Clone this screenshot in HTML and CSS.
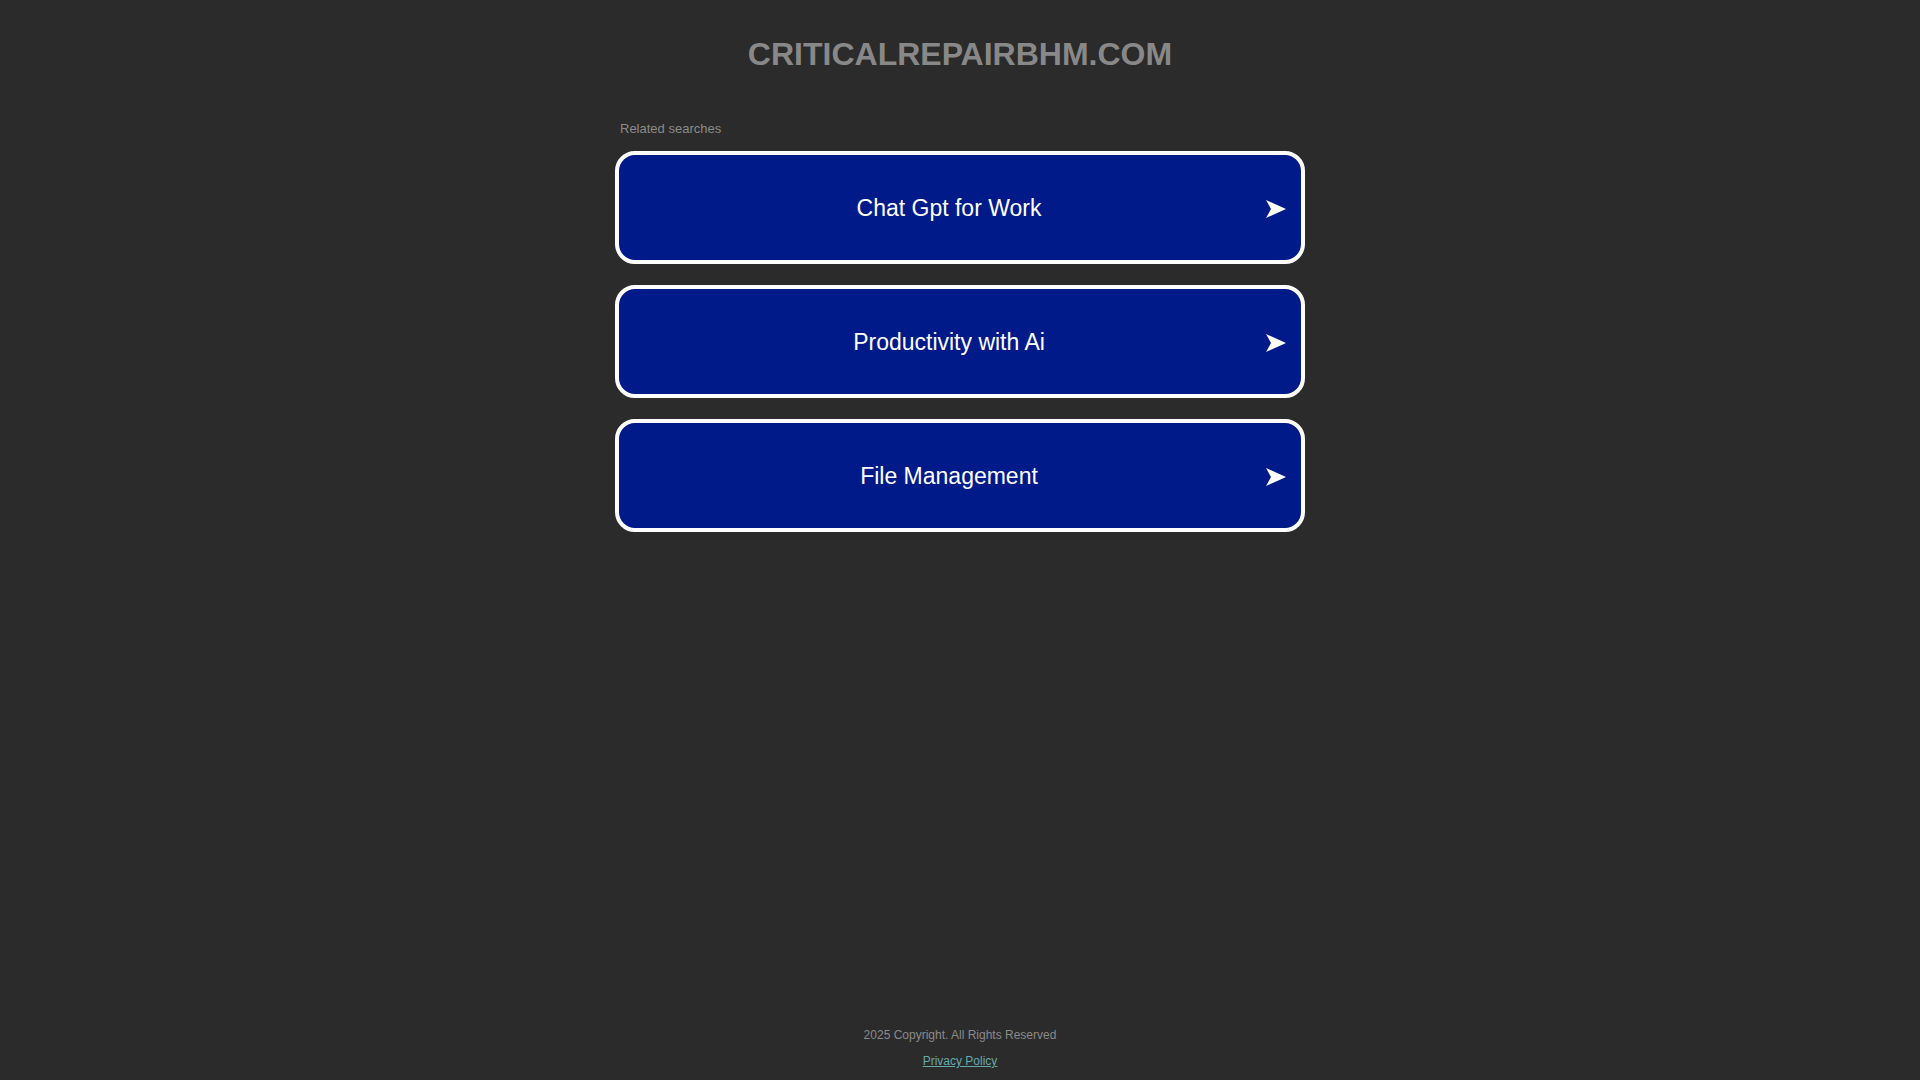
FILE: index.html
```html
<!DOCTYPE html>
<html lang="en">
<head>
<meta charset="utf-8">
<title>criticalrepairbhm.com</title>
<link rel="stylesheet" href="styles.css">
</head>
<body>
<div class="page">
  <header class="header">
    <h1 class="domain">CRITICALREPAIRBHM.COM</h1>
  </header>
  <main class="content">
    <div class="related">Related searches</div>
    <div class="links">
      <a class="link" href="#"><span class="label">Chat Gpt for Work</span><svg class="arrow" viewBox="0 0 20 18"><path d="M0 0 L20 9 L0 18 L5 9 Z"/></svg></a>
      <a class="link" href="#"><span class="label">Productivity with Ai</span><svg class="arrow" viewBox="0 0 20 18"><path d="M0 0 L20 9 L0 18 L5 9 Z"/></svg></a>
      <a class="link" href="#"><span class="label">File Management</span><svg class="arrow" viewBox="0 0 20 18"><path d="M0 0 L20 9 L0 18 L5 9 Z"/></svg></a>
    </div>
  </main>
  <footer class="footer">
    <div class="copy">2025 Copyright. All Rights Reserved</div>
    <a class="privacy" href="#">Privacy Policy</a>
  </footer>
</div>
</body>
</html>
```
FILE: styles.css
```css
html, body {
  margin: 0;
  padding: 0;
  background: #2b2b2b;
}
body {
  font-family: "Liberation Sans", Arial, sans-serif;
}
.page {
  min-height: 100vh;
  display: flex;
  flex-direction: column;
  align-items: center;
}
.header {
  padding-top: 35px;
}
.domain {
  margin: 0;
  font-size: 32px;
  line-height: 38px;
  font-weight: bold;
  color: #888888;
  text-align: center;
}
.content {
  width: 690px;
  margin-top: 48px;
}
.related {
  font-size: 13px;
  line-height: 16px;
  color: #8a8a8a;
  padding-left: 5px;
  margin-bottom: 14px;
}
.links {
  display: flex;
  flex-direction: column;
  gap: 21px;
}
.link {
  position: relative;
  display: flex;
  align-items: center;
  height: 113px;
  box-sizing: border-box;
  border: 4px solid #ffffff;
  border-radius: 20px;
  background: #011a8a;
  color: #ffffff;
  text-decoration: none;
}
.label {
  flex: 1;
  text-align: center;
  font-size: 23px;
  padding-right: 22px;
  padding-top: 2px;
}
.arrow {
  position: absolute;
  right: 15px;
  top: 50%;
  width: 20px;
  height: 18px;
  margin-top: -8px;
  fill: #ffffff;
}
.footer {
  margin-top: auto;
  padding-bottom: 11px;
  display: flex;
  flex-direction: column;
  align-items: center;
  gap: 10px;
  font-size: 12px;
  line-height: 16px;
}
.copy {
  color: #8a8a8a;
}
.privacy {
  color: #66a9ab;
  text-decoration: underline;
}
```
